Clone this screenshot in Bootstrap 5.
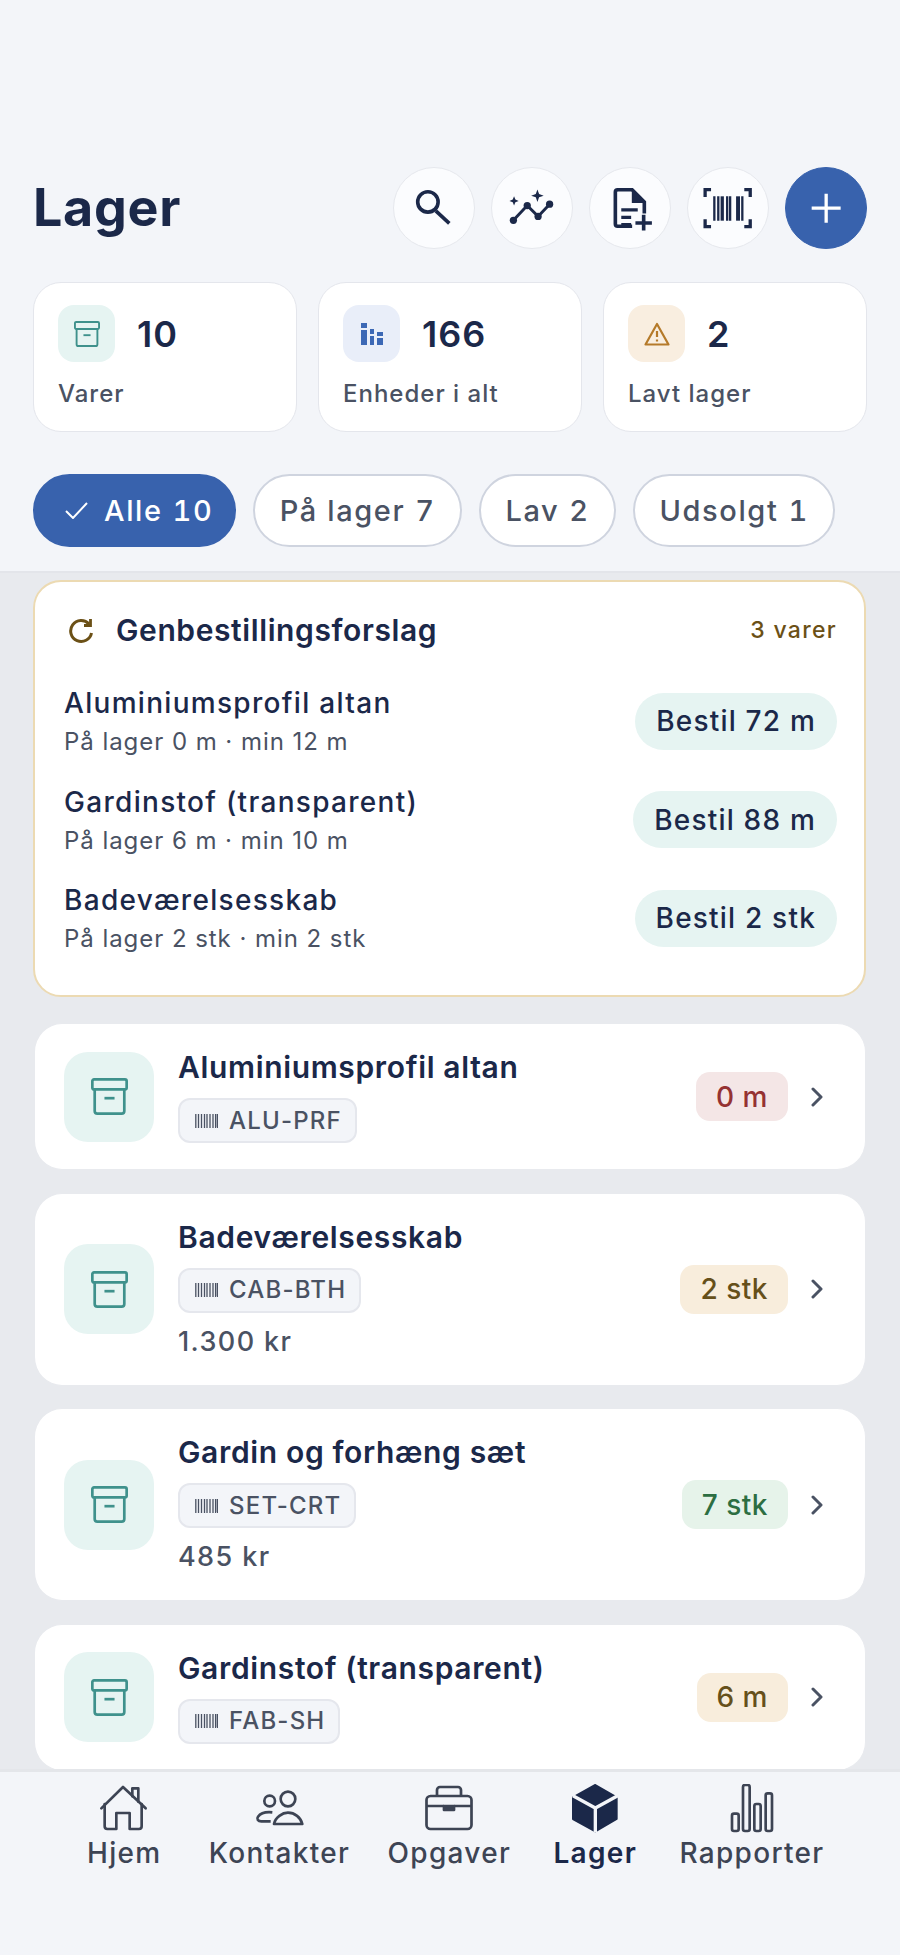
<!DOCTYPE html>
<html lang="da">
<head>
<meta charset="utf-8">
<title>Lager</title>
<link rel="stylesheet" href="https://cdn.jsdelivr.net/npm/bootstrap@5.3.0/dist/css/bootstrap.min.css">
<style>
:root{--navy:#1b2849;--slate:#4a5263;--blue:#3862ad;}
html,body{height:100%;}
body{font-family:Inter,"Liberation Sans",sans-serif;background:#f3f5f9;color:var(--navy);}
.app-shell{width:900px;height:1955px;overflow:hidden;}
.top-head{padding:167px 33px 24px;background:#f3f5f9;border-bottom:2px solid #e3e5ea;}
.page-title{font-size:52px;font-weight:700;line-height:82px;margin:0;letter-spacing:.7px;}
.tool-btn{width:82px;height:82px;border-radius:50%;background:#fbfcfe;border:1.5px solid #e6e8ed;padding:0;display:block;}
.tool-btn svg{display:block;width:100%;height:100%;}
.tool-add{background:var(--blue);border-color:var(--blue);}
.head-tools{gap:16px;}
.stat-row{gap:21px;margin-top:33px;}
.stat-box{width:264px;height:150px;border:1.5px solid #e4e6ec;border-radius:28px;background:#fff;padding:22px 24px;}
.stat-tile{width:57px;height:57px;border-radius:16px;}
.stat-num{font-size:36px;font-weight:600;line-height:59px;letter-spacing:1px;margin-left:22px;}
.stat-label{font-size:24px;font-weight:500;color:var(--slate);line-height:30px;margin-top:15px;letter-spacing:1px;}
.tile-teal{background:#e6f4f2;}
.tile-blue{background:#e9eef9;}
.tile-amber{background:#f9eee0;}
.filter-row{gap:17px;margin-top:42px;}
.filter-pill{height:73px;border-radius:37px;border:2.5px solid #cfd4df;background:#fff;color:var(--slate);font-size:29px;font-weight:500;letter-spacing:1.6px;padding:0 24.400px;line-height:1;}
.filter-on{background:var(--blue);border-color:var(--blue);color:#fff;padding:0 21px 0 30px;}
.filter-count{margin-left:10px;font-variant-numeric:tabular-nums;}
.list-area{background:#e8eaee;padding:7px 34px 0 33px;min-height:0;overflow:hidden;}
.reorder-box{height:417px;border:2px solid #ecdab2;border-radius:28px;background:#fff;padding:0 27px 0 29px;margin-bottom:26px;}
.reorder-head{height:90px;padding-top:7px;}
.reorder-title{font-size:30px;font-weight:600;letter-spacing:.6px;margin-left:21px;}
.reorder-icon{margin-left:3px;}
.reorder-meta{font-size:23px;font-weight:500;color:#6b5016;letter-spacing:1.3px;}
.reorder-line{height:98.5px;}
.reorder-name{font-size:28px;font-weight:500;line-height:36px;letter-spacing:1.300px;}
.reorder-sub{font-size:24px;font-weight:400;color:var(--slate);line-height:30px;margin-top:6px;letter-spacing:.95px;}
.order-pill{height:57px;border-radius:29px;background:#e6f4f2;color:var(--navy);border:0;font-size:28px;font-weight:500;padding:0 21px;letter-spacing:1.200px;line-height:1;}
.stock-card{border-style:solid;border-color:#e8eaee;border-width:1px 1px 1px 2px;border-radius:29px;background:#fff;padding:26px 28px 26px 29px;margin-top:22.5px;}
.stock-tile{width:90px;height:90px;border-radius:24px;flex:none;margin-right:24px;}
.stock-name{font-size:30px;font-weight:600;line-height:35px;letter-spacing:.65px;}
.sku-chip{height:45px;border:2px solid #e5e7ed;border-radius:12px;background:#f3f5f9;color:var(--slate);font-size:24px;font-weight:500;margin-top:13px;padding:0 13px 0 15px;letter-spacing:1.200px;}
.sku-chip svg{margin-right:11px;}
.stock-price{font-size:27px;font-weight:500;color:var(--slate);line-height:34px;margin-top:12px;letter-spacing:1.400px;}
.qty-tag{height:49px;border-radius:14px;font-size:28px;font-weight:500;padding:0 20px;letter-spacing:.5px;}
.qty-red{background:#f4e6e6;color:#953232;}
.qty-amber{background:#f8eddc;color:#66501a;}
.qty-green{background:#e6f3ea;color:#2d6e42;}
.chev{margin-left:22px;margin-right:13px;}
.bottom-nav{height:186px;flex:none;background:#f3f5f9;border-top:3px solid #e4e6ea;padding:12px 75.500px 0 87px;}
.nav-entry{color:#3d4454;font-size:28px;font-weight:500;letter-spacing:1.300px;line-height:34px;text-decoration:none;}
.nav-entry svg{display:block;height:49px;margin-bottom:3px;}
.nav-shift{margin-left:5px;margin-right:-5px;}
.nav-on{color:var(--navy);font-weight:600;}
</style>
</head>
<body>
<svg width="0" height="0" class="position-absolute" aria-hidden="true">
  <symbol id="box" viewBox="0 0 110 110">
    <rect x="4" y="4" width="102" height="30" rx="5" fill="none" stroke="currentColor" stroke-width="8"/>
    <path d="M11 34V98a8 8 0 0 0 8 8H91a8 8 0 0 0 8-8V34" fill="none" stroke="currentColor" stroke-width="8"/>
    <path d="M40 60H70" stroke="currentColor" stroke-width="8"/>
  </symbol>
  <symbol id="mini" viewBox="0 0 23 14">
    <path d="M.8 0V14M3.5 0V14M6.5 0V14M9.5 0V14M12 0V14M15 0V14M18 0V14M20.6 0V14M22.4 0V14" stroke="#4a5263" stroke-width="1.3"/>
  </symbol>
  <symbol id="chevron" viewBox="0 0 14 20">
    <path d="M3 2 11 10 3 18" fill="none" stroke="#4a5263" stroke-width="3" stroke-linecap="round" stroke-linejoin="round"/>
  </symbol>
</svg>

<div class="app-shell d-flex flex-column">
  <header class="top-head flex-none">
    <div class="d-flex align-items-center justify-content-between">
      <h1 class="page-title">Lager</h1>
      <div class="head-tools d-flex">
        <button class="tool-btn btn" aria-label="Søg"><svg viewBox="0 0 243 243"><circle cx="103" cy="103" r="31" fill="none" stroke="#1b2849" stroke-width="11"/><path d="M127 130 168 168" stroke="#1b2849" stroke-width="11"/></svg></button>
        <button class="tool-btn btn" aria-label="Indsigt"><svg viewBox="0 0 243 243"><path d="M65 159 107 114 140 147 175 110" fill="none" stroke="#1b2849" stroke-width="9"/><g fill="#1b2849"><circle cx="65" cy="159" r="11"/><circle cx="107" cy="114" r="11"/><circle cx="140" cy="147" r="11"/><circle cx="175" cy="110" r="11"/><path d="M67 86 71 96 81 100 71 104 67 114 63 104 53 100 63 96Z"/><path d="M138 65 143 79 157 84 143 89 138 103 133 89 119 84 133 79Z"/></g></svg></button>
        <button class="tool-btn btn" aria-label="Ny fil"><svg viewBox="0 0 243 243"><path d="M128 177H84a7 7 0 0 1-7-7V73a7 7 0 0 1 7-7H128L165 103V138" fill="none" stroke="#1b2849" stroke-width="11"/><path d="M127 64 170 106H127Z" fill="#1b2849"/><path d="M95 127H145M95 150H125M95 172H125" stroke="#1b2849" stroke-width="10"/><path d="M138 167H188M163 142V190" stroke="#1b2849" stroke-width="11"/></svg></button>
        <button class="tool-btn btn" aria-label="Stregkode"><svg viewBox="0 0 243 243"><path d="M70 66H52V88M171 66H189V88M70 178H52V156M171 178H189V156" fill="none" stroke="#1b2849" stroke-width="10"/><path d="M80 86V160M92 86V160M119 86V160M128 86V160M165 86V160" stroke="#1b2849" stroke-width="7"/><path d="M152 86V160" stroke="#1b2849" stroke-width="12"/><path d="M104 86V160" stroke="#1b2849" stroke-width="10"/></svg></button>
        <button class="tool-btn tool-add btn" aria-label="Tilføj"><svg viewBox="0 0 243 243"><path d="M78 122H166M122 78V166" stroke="#fff" stroke-width="10"/></svg></button>
      </div>
    </div>

    <div class="stat-row d-flex">
      <div class="stat-box">
        <div class="d-flex">
          <div class="stat-tile tile-teal d-flex align-items-center justify-content-center"><svg width="26" height="26" style="color:#3f918c"><use href="#box"/></svg></div>
          <div class="stat-num">10</div>
        </div>
        <div class="stat-label">Varer</div>
      </div>
      <div class="stat-box">
        <div class="d-flex">
          <div class="stat-tile tile-blue d-flex align-items-center justify-content-center"><svg width="22" height="22" viewBox="0 0 22 22" fill="#3c68b5"><path d="M0 0H6V5H0ZM0 7H6V22H0ZM9 6H13V11H9ZM9 13H13V22H9ZM16 9H22V13H16ZM16 15H22V22H16Z"/></svg></div>
          <div class="stat-num">166</div>
        </div>
        <div class="stat-label">Enheder i alt</div>
      </div>
      <div class="stat-box">
        <div class="d-flex">
          <div class="stat-tile tile-amber d-flex align-items-center justify-content-center"><svg width="26" height="24" viewBox="0 0 26 24" fill="none" stroke="#b57a2a" stroke-width="2.2" stroke-linejoin="round"><path d="M13 2 24.5 22.5H1.5Z"/><path d="M13 9V15M13 17.5V19.5"/></svg></div>
          <div class="stat-num">2</div>
        </div>
        <div class="stat-label">Lavt lager</div>
      </div>
    </div>

    <div class="filter-row d-flex">
      <button class="filter-pill filter-on btn d-flex align-items-center"><svg width="23" height="17" viewBox="0 0 23 17" class="me-3" fill="none" stroke="#fff" stroke-width="2"><path d="M1 9 8 16 22 1"/></svg>Alle<span class="filter-count">10</span></button>
      <button class="filter-pill btn">På lager<span class="filter-count">7</span></button>
      <button class="filter-pill btn">Lav<span class="filter-count">2</span></button>
      <button class="filter-pill btn">Udsolgt<span class="filter-count">1</span></button>
    </div>
  </header>

  <main class="list-area flex-grow-1">
    <section class="reorder-box">
      <div class="reorder-head d-flex align-items-center">
        <svg class="reorder-icon" width="28" height="26" viewBox="0 0 28 26" fill="none" stroke="#6b5016" stroke-width="3"><path d="M22 6A10.500 10.500 0 1 0 24.500 15"/><path d="M23.500 1V7.500H17" stroke-width="2.800"/></svg>
        <span class="reorder-title">Genbestillingsforslag</span>
        <span class="reorder-meta ms-auto">3 varer</span>
      </div>
      <div class="reorder-line d-flex align-items-center justify-content-between">
        <div><div class="reorder-name">Aluminiumsprofil altan</div><div class="reorder-sub">På lager 0 m · min 12 m</div></div>
        <button class="order-pill btn">Bestil 72 m</button>
      </div>
      <div class="reorder-line d-flex align-items-center justify-content-between">
        <div><div class="reorder-name">Gardinstof (transparent)</div><div class="reorder-sub">På lager 6 m · min 10 m</div></div>
        <button class="order-pill btn">Bestil 88 m</button>
      </div>
      <div class="reorder-line d-flex align-items-center justify-content-between">
        <div><div class="reorder-name">Badeværelsesskab</div><div class="reorder-sub">På lager 2 stk · min 2 stk</div></div>
        <button class="order-pill btn">Bestil 2 stk</button>
      </div>
    </section>

    <article class="stock-card d-flex align-items-center">
      <div class="stock-tile tile-teal d-flex align-items-center justify-content-center"><svg width="37" height="37" style="color:#3f918c"><use href="#box"/></svg></div>
      <div class="flex-grow-1"><div class="stock-name">Aluminiumsprofil altan</div><div class="sku-chip d-inline-flex align-items-center"><svg width="23" height="14"><use href="#mini"/></svg>ALU-PRF</div></div>
      <span class="qty-tag qty-red d-flex align-items-center">0 m</span>
      <svg class="chev" width="14" height="20"><use href="#chevron"/></svg>
    </article>
    <article class="stock-card d-flex align-items-center">
      <div class="stock-tile tile-teal d-flex align-items-center justify-content-center"><svg width="37" height="37" style="color:#3f918c"><use href="#box"/></svg></div>
      <div class="flex-grow-1"><div class="stock-name">Badeværelsesskab</div><div class="sku-chip d-inline-flex align-items-center"><svg width="23" height="14"><use href="#mini"/></svg>CAB-BTH</div><div class="stock-price">1.300 kr</div></div>
      <span class="qty-tag qty-amber d-flex align-items-center">2 stk</span>
      <svg class="chev" width="14" height="20"><use href="#chevron"/></svg>
    </article>
    <article class="stock-card d-flex align-items-center">
      <div class="stock-tile tile-teal d-flex align-items-center justify-content-center"><svg width="37" height="37" style="color:#3f918c"><use href="#box"/></svg></div>
      <div class="flex-grow-1"><div class="stock-name">Gardin og forhæng sæt</div><div class="sku-chip d-inline-flex align-items-center"><svg width="23" height="14"><use href="#mini"/></svg>SET-CRT</div><div class="stock-price">485 kr</div></div>
      <span class="qty-tag qty-green d-flex align-items-center">7 stk</span>
      <svg class="chev" width="14" height="20"><use href="#chevron"/></svg>
    </article>
    <article class="stock-card d-flex align-items-center">
      <div class="stock-tile tile-teal d-flex align-items-center justify-content-center"><svg width="37" height="37" style="color:#3f918c"><use href="#box"/></svg></div>
      <div class="flex-grow-1"><div class="stock-name">Gardinstof (transparent)</div><div class="sku-chip d-inline-flex align-items-center"><svg width="23" height="14"><use href="#mini"/></svg>FAB-SH</div></div>
      <span class="qty-tag qty-amber d-flex align-items-center">6 m</span>
      <svg class="chev" width="14" height="20"><use href="#chevron"/></svg>
    </article>
  </main>

  <nav class="bottom-nav d-flex justify-content-between align-items-start">
    <a class="nav-entry d-flex flex-column align-items-center" href="#"><svg viewBox="145 45 155 147" fill="none" stroke="currentColor" stroke-width="8" stroke-linejoin="round" stroke-linecap="round"><path d="M155 118 220 54 288 118"/><path d="M248 82V58H266V98"/><path d="M165 105V172a8 8 0 0 0 8 8H200V132H240V180H268a8 8 0 0 0 8-8V105"/></svg>Hjem</a>
    <a class="nav-entry nav-shift d-flex flex-column align-items-center" href="#"><svg viewBox="610 45 155 147" fill="none" stroke="currentColor" stroke-width="8" stroke-linejoin="round"><circle cx="657" cy="96" r="16"/><circle cx="712" cy="90" r="22"/><path d="M660 157H632C622 157 617 150 622 143 630 132 645 128 665 130"/><path d="M670 165C674 145 695 131 712 131 732 131 750 145 755 165Z"/></svg>Kontakter</a>
    <a class="nav-entry d-flex flex-column align-items-center" href="#"><svg viewBox="0 -1 48 49" fill="none" stroke="currentColor" stroke-width="2.700" stroke-linejoin="round"><rect x="1.500" y="11" width="45" height="33" rx="4"/><path d="M12 11V5a3 3 0 0 1 3-3H33a3 3 0 0 1 3 3V11"/><path d="M1.500 21H19M29 21H46.500"/><path d="M19 21H29V25H19Z" fill="currentColor"/></svg>Opgaver</a>
    <a class="nav-entry nav-on d-flex flex-column align-items-center" href="#"><svg viewBox="210 45 144 147"><path d="M283 48 347 85V150L283 187 216 150V85Z" fill="#1b2849" stroke="#1b2849" stroke-width="6" stroke-linejoin="round"/><path d="M216 80 283 117 350 80M283 117V190" fill="none" stroke="#f3f5f9" stroke-width="10"/></svg>Lager</a>
    <a class="nav-entry d-flex flex-column align-items-center" href="#"><svg viewBox="685 45 138 147" fill="none" stroke="currentColor" stroke-width="8"><rect x="694" y="134" width="20" height="52" rx="6"/><rect x="727" y="48" width="20" height="138" rx="6"/><rect x="761" y="105" width="19" height="81" rx="6"/><rect x="795" y="73" width="19" height="113" rx="6"/></svg>Rapporter</a>
  </nav>
</div>
</body>
</html>
